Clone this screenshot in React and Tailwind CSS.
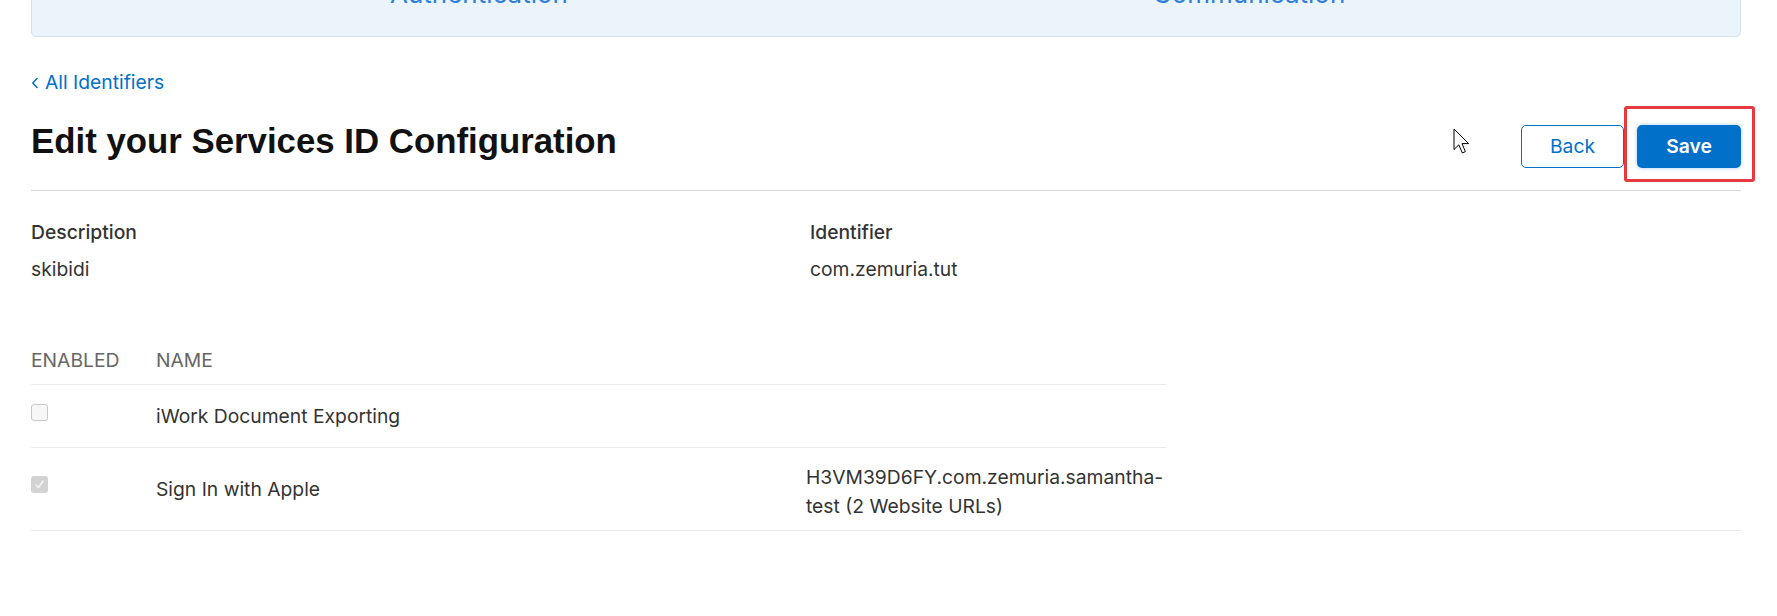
import React from 'react';

const body = { fontFamily: 'Inter, "Liberation Sans", Arial, sans-serif' };

const Checkbox = ({ checked }) =>
  checked ? (
    <span className="flex h-[17px] w-[17px] items-center justify-center rounded-[3px] bg-[#d3d3d3]">
      <svg width="11" height="11" viewBox="0 0 11 11" fill="none">
        <path d="M2 6 L4.5 8.5 L9 2" stroke="#f4f4f4" strokeWidth="1.6" strokeLinecap="round" strokeLinejoin="round" />
      </svg>
    </span>
  ) : (
    <span className="block h-[17px] w-[17px] rounded-[3px] border border-[#c9c9c9] bg-[#f7f7f7]" />
  );

const Cursor = () => (
  <svg className="absolute left-[1453px] top-[128px]" width="19" height="27" viewBox="0 0 19 27">
    <path d="M1 1 L1 21.5 L5.8 16.8 L9.3 25 L12.4 23.6 L9 15.6 L15.6 15.6 Z" fill="#fff" stroke="#000" strokeWidth="1" strokeLinejoin="round" />
  </svg>
);

export default function App() {
  return (
    <div className="relative min-h-screen overflow-hidden bg-white text-[#333]" style={body}>
      <div className="pl-[31px] pr-[36px]">
        {/* top capabilities card, mostly scrolled away */}
        <div className="-mt-[43px] flex h-[80px] items-end rounded-b-[5px] border border-[#d3e2f1] bg-[#ebf3fb] pb-[26px]">
          <div className="flex w-full text-[26px] leading-[32px] text-[#2f7fd6]">
            <div className="w-[894px] text-center">Authentication</div>
            <div className="w-[646px] text-center">Communication</div>
          </div>
        </div>

        <a className="mt-[31px] flex items-center gap-[6px] text-[19.3px] leading-[29px] text-[#0070c9]">
          <svg width="8" height="12" viewBox="0 0 8 12" fill="none">
            <path d="M6 1.5 L1.8 6 L6 10.5" stroke="#0070c9" strokeWidth="1.5" strokeLinecap="round" strokeLinejoin="round" />
          </svg>
          <span>All Identifiers</span>
        </a>

        <div className="mt-[22px] flex items-start justify-between">
          <h1 className="text-[34.8px] font-bold leading-[43px] text-[#111]" style={{ fontFamily: '"Liberation Sans", Arial, sans-serif' }}>
            Edit your Services ID Configuration
          </h1>
          <div className="mt-[6px] flex gap-[13px]">
            <button className="h-[43px] w-[103px] rounded-[5px] border border-[#0070c9] bg-white text-[19.3px] text-[#0070c9]">
              Back
            </button>
            <div className="relative">
              <button className="h-[43px] w-[104px] rounded-[5px] bg-[#0070c9] text-[19.3px] font-semibold text-white shadow-[0_0_4px_rgba(0,112,201,0.35)]">
                Save
              </button>
              <span className="absolute -left-[13px] -top-[19px] h-[76px] w-[131px] rounded-[3px] border-[3px] border-[#e5393e]" />
            </div>
          </div>
        </div>

        <div className="mt-[22px] h-px bg-[#d6d6d6]" />

        <div className="mt-[27px] flex text-[19.3px] leading-[29px]">
          <div className="w-[779px]">
            <div className="font-medium text-[#333]">Description</div>
            <div className="mt-[8px]">skibidi</div>
          </div>
          <div>
            <div className="font-medium text-[#333]">Identifier</div>
            <div className="mt-[8px]">com.zemuria.tut</div>
          </div>
        </div>

        <div className="mt-[62px] w-[1136px] text-[19.3px] leading-[29px]">
          <div className="grid grid-cols-[125px_650px_1fr] border-b border-[#ebebeb] pb-[9px] text-[#666]">
            <div>ENABLED</div>
            <div>NAME</div>
            <div />
          </div>
          <div className="grid h-[63px] grid-cols-[125px_650px_1fr] border-b border-[#ebebeb]">
            <div className="pt-[19px]"><Checkbox /></div>
            <div className="pt-[17px]">iWork Document Exporting</div>
            <div />
          </div>
          <div className="grid h-[82px] grid-cols-[125px_650px_1fr]">
            <div className="pt-[28px]"><Checkbox checked /></div>
            <div className="pt-[27px]">Sign In with Apple</div>
            <div className="whitespace-nowrap pt-[15px]">
              H3VM39D6FY.com.zemuria.samantha-
              <br />
              test (2 Website URLs)
            </div>
          </div>
        </div>
        <div className="h-px bg-[#ebebeb]" />
      </div>
      <Cursor />
    </div>
  );
}
